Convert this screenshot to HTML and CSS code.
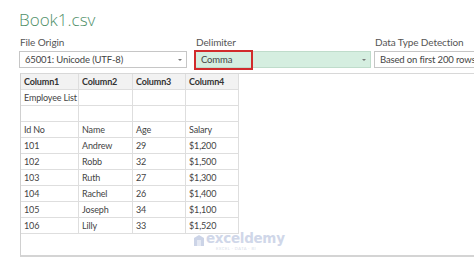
FILE: index.html
```
<!DOCTYPE html>
<html lang="en">
<head>
    <meta charset="UTF-8">
    <meta name="viewport" content="width=device-width, initial-scale=1.0">
    <title>Book1.csv</title>
    <link rel="stylesheet" href="styles.css">
</head>
<body>
    <div class="dialog">
        <h1 class="title">Book1.csv</h1>

        <!-- Import options -->
        <div class="options">
            <div class="field origin">
                <div class="label">File Origin</div>
                <div class="select">65001: Unicode (UTF-8)<span class="caret"></span></div>
            </div>
            <div class="field delim">
                <div class="label">Delimiter</div>
                <div class="select active">Comma<span class="caret"></span></div>
                <div class="highlight"></div>
            </div>
            <div class="field detect">
                <div class="label">Data Type Detection</div>
                <div class="select">Based on first 200 rows</div>
            </div>
        </div>

        <!-- Data preview -->
        <div class="preview">
            <table class="grid">
                <tr class="head">
                    <th>Column1</th><th>Column2</th><th>Column3</th><th>Column4</th>
                </tr>
                <tr><td>Employee List</td><td></td><td></td><td></td></tr>
                <tr><td></td><td></td><td></td><td></td></tr>
                <tr><td>Id No</td><td>Name</td><td>Age</td><td>Salary</td></tr>
                <tr><td>101</td><td>Andrew</td><td>29</td><td>$1,200</td></tr>
                <tr><td>102</td><td>Robb</td><td>32</td><td>$1,500</td></tr>
                <tr><td>103</td><td>Ruth</td><td>27</td><td>$1,300</td></tr>
                <tr><td>104</td><td>Rachel</td><td>26</td><td>$1,400</td></tr>
                <tr><td>105</td><td>Joseph</td><td>34</td><td>$1,100</td></tr>
                <tr><td>106</td><td>Lilly</td><td>33</td><td>$1,520</td></tr>
            </table>
            <div class="watermark">
                <svg class="mark-icon" width="10" height="11" viewBox="0 0 10 11">
                    <path d="M5 0 L10 3 L10 11 L0 11 L0 3 Z" fill="#ccd4e7"/>
                    <path d="M3 5 L7 5 L7 11 L3 11 Z" fill="#e5e9f3"/>
                </svg>
                <div class="mark-text">
                    <span class="mark-name">exceldemy</span>
                    <span class="mark-sub">EXCEL · DATA · BI</span>
                </div>
            </div>
        </div>
    </div>
</body>
</html>
```
FILE: styles.css
```
body {
    margin: 0;
    padding: 0;
    background-color: #ffffff;
    font-family: Lato, "Open Sans", sans-serif;
    color: #444444;
    overflow: hidden;
}

.dialog {
    width: 474px;
    height: 259px;
    overflow: hidden;
}

.title {
    margin: 0;
    padding: 9px 0 0 19px;
    height: 27px;
    font-family: "Open Sans", sans-serif;
    font-size: 17px;
    font-weight: 300;
    color: #4f8f68;
    line-height: 22px;
}

.options {
    display: flex;
    padding-left: 19px;
    height: 37px;
}

.field {
    position: relative;
    flex-shrink: 0;
}

.origin {
    width: 168px;
    margin-right: 8px;
}

.delim {
    width: 176px;
    margin-right: 3px;
}

.detect {
    width: 120px;
}

.label {
    font-size: 10px;
    line-height: 13px;
    padding-left: 1px;
    color: #555555;
    letter-spacing: -0.1px;
}

.select {
    position: relative;
    margin-top: 2px;
    height: 15px;
    border: 1px solid #c6c6c6;
    font-size: 9.5px;
    line-height: 15px;
    padding-left: 5px;
    white-space: nowrap;
    color: #444444;
    letter-spacing: -0.15px;
}

.select.active {
    background-color: #d5eee0;
    border-color: #bfdccb;
}

.caret {
    position: absolute;
    right: 4px;
    top: 7px;
    border-left: 2px solid transparent;
    border-right: 2px solid transparent;
    border-top: 2px solid #777777;
}

.highlight {
    position: absolute;
    left: -1px;
    top: 14px;
    width: 55px;
    height: 16px;
    border: 2px solid #d12c2c;
}

.preview {
    position: relative;
    margin-left: 20px;
    height: 181px;
    border-top: 1px solid #d8d8d8;
    border-left: 1px solid #d0d0d0;
    border-bottom: 2px solid #d4d4d4;
}

.grid {
    border-collapse: collapse;
    table-layout: fixed;
    width: 218px;
    font-size: 9px;
    letter-spacing: -0.15px;
}

.grid th,
.grid td {
    height: 15px;
    padding: 0 0 0 3px;
    border: 1px solid #dedede;
    text-align: left;
    white-space: nowrap;
    overflow: hidden;
    line-height: 15px;
}

.grid tr:first-child th {
    border-top: none;
}

.grid th:first-child,
.grid td:first-child {
    border-left: none;
    width: 54px;
}

.grid th:nth-child(2) { width: 50px; }
.grid th:nth-child(3) { width: 49px; }
.grid th:nth-child(4) { width: 49px; }

.head th {
    background-color: #f2f2f2;
    font-weight: bold;
    color: #333333;
}

.watermark {
    position: absolute;
    left: 173px;
    top: 157px;
    display: flex;
    align-items: flex-start;
    gap: 2px;
}

.mark-icon {
    margin-top: 4px;
}

.mark-text {
    display: flex;
    flex-direction: column;
}

.mark-name {
    font-family: "DejaVu Sans", sans-serif;
    font-weight: bold;
    font-size: 13.5px;
    line-height: 15px;
    color: #d0d7e9;
    letter-spacing: -0.3px;
}

.mark-sub {
    font-size: 4px;
    line-height: 5px;
    color: #d8dde9;
    padding-left: 10px;
    letter-spacing: 0.5px;
}
```
